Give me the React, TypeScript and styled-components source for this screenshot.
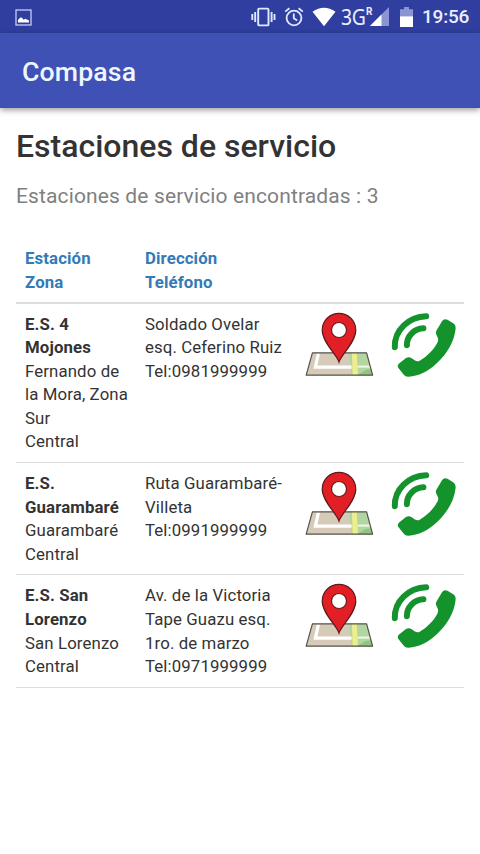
import React from "react";
import styled, { createGlobalStyle } from "styled-components";

interface IStation {
  name: string;
  zone: string;
  department: string;
  address: string;
  phone: string;
}

const stations: IStation[] = [
  {
    name: "E.S. 4 Mojones",
    zone: "Fernando de la Mora, Zona Sur",
    department: "Central",
    address: "Soldado Ovelar esq. Ceferino Ruiz",
    phone: "0981999999",
  },
  {
    name: "E.S. Guarambaré",
    zone: "Guarambaré",
    department: "Central",
    address: "Ruta Guarambaré-Villeta",
    phone: "0991999999",
  },
  {
    name: "E.S. San Lorenzo",
    zone: "San Lorenzo",
    department: "Central",
    address: "Av. de la Victoria Tape Guazu esq. 1ro. de marzo",
    phone: "0971999999",
  },
];

const PictureIcon = () => (
  <svg width="17" height="17" viewBox="0 0 17 17">
    <rect x="1" y="1" width="15" height="15" fill="none" stroke="#c5cdf5" strokeWidth="1.3" />
    <path d="M3 13.6V11L5.4 8.6Q6.6 8 7.6 9.6L8.6 10.7L10.3 9.8L14 11.6V13.6Z" fill="#fff" />
  </svg>
);

const VibrateIcon = () => (
  <svg width="25" height="20" viewBox="0 0 25 20">
    <g fill="none" stroke="#dfe9ff" strokeWidth="1.9">
      <rect x="7.2" y="1.6" width="10.3" height="16.8" rx="1" />
      <path d="M4.2 5V15M20.6 5V15M1.3 7V13M23.5 7V13" />
    </g>
  </svg>
);

const AlarmIcon = () => (
  <svg width="20" height="20" viewBox="0 0 20 20">
    <g fill="none" stroke="#dfe9ff" strokeWidth="1.8">
      <circle cx="10" cy="11" r="7.4" />
      <path d="M9.8 6.5V11.3L13.2 13.6M1.2 4.6L5.4 1.3M14.6 1.3L18.8 4.6" />
    </g>
  </svg>
);

const WifiIcon = () => (
  <svg width="24" height="20" viewBox="0 0 24 20">
    <path d="M0.5 4.8Q12 -3.4 23.5 4.8L12 19.3Z" fill="#fff" />
  </svg>
);

const SignalIcon = () => (
  <svg width="19" height="19" viewBox="0 0 19 19">
    <path d="M0 19L19 0V19Z" fill="#8b95d3" />
    <path d="M0 19L11.5 7.5V19Z" fill="#fff" />
  </svg>
);

const BatteryIcon = () => (
  <svg width="13" height="20" viewBox="0 0 13 20">
    <path d="M0 2.2H4V0H9V2.2H13V10H0Z" fill="#8b95d3" />
    <path d="M0 9.4H13V20H0Z" fill="#fff" />
  </svg>
);

const MapIcon = () => (
  <svg width="69" height="66" viewBox="0 0 69 66">
    <path d="M7.4 40.8H61.6L67.6 63.2H1.2Z" fill="#d6cbb9" />
    <path d="M43.5 40.8H61.6L67.6 63.2H46.5Z" fill="#b3d6a0" />
    <path d="M60.5 58L66 57.5L67.6 63.2H52Z" fill="#93c383" />
    <path d="M47 40.8H51.6L53 63.2H47.6Z" fill="#f0ee8c" />
    <path d="M13.4 41.5L10.4 55.2H46.5" fill="none" stroke="#fff" strokeWidth="3.2" />
    <path d="M52.6 54.6H65" fill="none" stroke="#eaf5e2" strokeWidth="2.2" />
    <path
      d="M7.4 40.8H61.6L67.6 63.2H1.2Z"
      fill="none"
      stroke="#54534b"
      strokeWidth="1.2"
      strokeLinejoin="round"
    />
    <path
      d="M34 50C31.5 42.5 17.2 30 17.2 18A16.8 16.6 0 0 1 50.8 18C50.8 30 36.5 42.5 34 50Z"
      fill="#e31f26"
      stroke="#5d1c1c"
      strokeWidth="1.2"
    />
    <circle cx="34" cy="18" r="7.5" fill="#fff" stroke="#6b1a1c" strokeWidth="1.2" />
  </svg>
);

const CallIcon = () => (
  <svg width="67" height="66" viewBox="0 0 67 66">
    <path
      d="M4.8 35.2C4.2 18.5 18.5 4.6 36.2 4.2M16.9 33.2C16.6 24.5 24 16.6 33.4 16.3"
      fill="none"
      stroke="#14922c"
      strokeWidth="6"
      strokeLinecap="round"
    />
    <path
      d="M46.5 18.5L52 9.2Q54 6.2 57.5 7.8L63.2 11.2Q66 13 65.6 17C64.2 30 57 42 46.5 51.5C37.5 60 28.5 64 18.5 64.8Q15.5 65 13.8 62.7L8.4 56Q6.7 53.5 9.4 51.3L16 46Q19 44.2 21.7 46.2L25 48.6Q27.2 50 29.7 48.7C37 44.5 43.5 38 47.5 30.5Q48.7 28.3 48 26.2L46.1 22Q45.4 20.2 46.5 18.5Z"
      fill="#14922c"
    />
  </svg>
);

export default function App() {
  return (
    <>
      <GlobalStyle />
      <StatusBar>
        <PictureIcon />
        <StatusIcons>
          <VibrateIcon />
          <AlarmIcon />
          <WifiIcon />
          <Network>
            <NetworkType>3G</NetworkType>
            <Roaming>R</Roaming>
            <SignalIcon />
          </Network>
          <BatteryIcon />
          <Clock>19:56</Clock>
        </StatusIcons>
      </StatusBar>
      <AppBar>Compasa</AppBar>
      <Content>
        <Title>Estaciones de servicio</Title>
        <Summary>Estaciones de servicio encontradas : {stations.length}</Summary>
        <Table>
          <thead>
            <tr>
              <HeaderCell width={120}>
                Estación
                <br />
                Zona
              </HeaderCell>
              <HeaderCell width={160}>
                Dirección
                <br />
                Teléfono
              </HeaderCell>
              <HeaderCell width={85} />
              <HeaderCell width={83} />
            </tr>
          </thead>
          <tbody>
            {stations.map(station => (
              <tr key={station.name}>
                <Cell>
                  <strong>{station.name}</strong>
                  <br />
                  {station.zone}
                  <br />
                  {station.department}
                </Cell>
                <Cell>
                  {station.address}
                  <br />
                  Tel:{station.phone}
                </Cell>
                <IconCell>
                  <MapIcon />
                </IconCell>
                <IconCell>
                  <CallIcon />
                </IconCell>
              </tr>
            ))}
          </tbody>
        </Table>
      </Content>
    </>
  );
}

const GlobalStyle = createGlobalStyle`
  * {
    box-sizing: border-box;
  }
  body {
    margin: 0;
    background-color: #fff;
    color: #333;
    font-family: Roboto, "Liberation Sans", sans-serif;
    font-size: 16.8px;
    letter-spacing: 0.12px;
    line-height: 23.55px;
  }
  svg {
    display: block;
    flex-shrink: 0;
  }
`;

const StatusBar = styled.div`
  display: flex;
  align-items: center;
  justify-content: space-between;
  height: 33px;
  padding: 1px 11px 0 15px;
  background-color: #303f9f;
`;

const StatusIcons = styled.div`
  display: flex;
  align-items: center;
  color: #e8eeff;

  & > svg:nth-child(2) {
    margin-left: 8px;
  }
  & > svg:nth-child(3) {
    margin-left: 8px;
  }
`;

const Network = styled.div`
  display: flex;
  align-items: center;
  width: 47px;
  margin: 0 12px 0 5px;

  svg {
    margin-left: -3px;
  }
`;

const NetworkType = styled.span`
  width: 25px;
  font-family: "Noto Sans", sans-serif;
  font-size: 22.5px;
  letter-spacing: -0.5px;
  transform: scaleX(0.86);
  transform-origin: left;
`;

const Roaming = styled.span`
  align-self: flex-start;
  font-size: 10px;
  font-weight: 700;
  line-height: 14px;
`;

const Clock = styled.span`
  width: 47px;
  margin-left: 9px;
  font-size: 19px;
  font-weight: 500;
  letter-spacing: -0.2px;
`;

const AppBar = styled.header`
  display: flex;
  align-items: center;
  height: 75px;
  padding: 5px 22px 0;
  background-color: #3f51b5;
  box-shadow: 0 2px 6px rgba(0, 0, 0, 0.4);
  color: #eef6ff;
  font-size: 26.7px;
  font-weight: 500;
`;

const Content = styled.main`
  padding: 20px 16px;
`;

const Title = styled.h1`
  margin: 0;
  font-size: 32px;
  font-weight: 500;
  letter-spacing: 0;
  line-height: 36px;
`;

const Summary = styled.p`
  margin: 18px 0 37px;
  color: #808080;
  font-size: 21px;
  letter-spacing: 0.13px;
  line-height: 28px;
`;

const Table = styled.table`
  width: 448px;
  table-layout: fixed;
  border-collapse: separate;
  border-spacing: 0;
`;

const HeaderCell = styled.th<{ width: number }>`
  width: ${props => props.width}px;
  padding: 0 9px 7.5px;
  border-bottom: 2px solid #ddd;
  color: #337ab7;
  font-weight: 700;
  text-align: left;
`;

const Cell = styled.td`
  padding: 9px 5px 8.2px 9px;
  border-bottom: 1px solid #ddd;
  vertical-align: top;
`;

const IconCell = styled(Cell)`
  padding-top: 8px;
`;
